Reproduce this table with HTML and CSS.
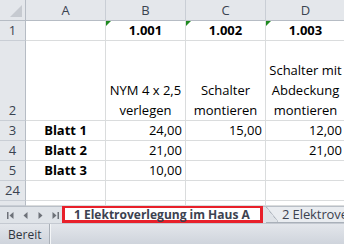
FILE: index.html
```html
<!DOCTYPE html>
<html lang="de">
<head>
<meta charset="utf-8">
<title>Elektroverlegung</title>
<link rel="stylesheet" href="styles.css">
</head>
<body>
<div class="book">
  <div class="sheet">
    <div class="hd corner"><span class="corner-tri"></span></div>
    <div class="hd col">A</div>
    <div class="hd col">B</div>
    <div class="hd col">C</div>
    <div class="hd col">D</div>

    <div class="hd row">1</div>
    <div class="c"></div>
    <div class="c b ctr flag">1.001</div>
    <div class="c b ctr flag">1.002</div>
    <div class="c b ctr flag">1.003</div>

    <div class="hd row">2</div>
    <div class="c"></div>
    <div class="c ctr wrap">NYM 4 x 2,5<br>verlegen</div>
    <div class="c ctr wrap">Schalter<br>montieren</div>
    <div class="c ctr wrap">Schalter mit<br>Abdeckung<br>montieren</div>

    <div class="hd row">3</div>
    <div class="c b ctr">Blatt 1</div>
    <div class="c num">24,00</div>
    <div class="c num">15,00</div>
    <div class="c num">12,00</div>

    <div class="hd row">4</div>
    <div class="c b ctr">Blatt 2</div>
    <div class="c num">21,00</div>
    <div class="c num"></div>
    <div class="c num">21,00</div>

    <div class="hd row">5</div>
    <div class="c b ctr">Blatt 3</div>
    <div class="c num">10,00</div>
    <div class="c"></div>
    <div class="c"></div>

    <div class="hd row">24</div>
    <div class="c"></div>
    <div class="c"></div>
    <div class="c"></div>
    <div class="c"></div>

    <div class="hd row"></div>
    <div class="c"></div>
    <div class="c"></div>
    <div class="c"></div>
    <div class="c"></div>
  </div>

  <div class="tabbar">
    <div class="nav">
      <svg width="9" height="9" viewBox="0 0 9 9"><rect x="1" y="1" width="1.5" height="7" fill="#6d7178"/><path d="M7.5 1 L3.5 4.5 L7.5 8 Z" fill="#6d7178"/></svg>
      <svg width="9" height="9" viewBox="0 0 9 9"><path d="M6.5 1 L2.5 4.5 L6.5 8 Z" fill="#6d7178"/></svg>
      <svg width="9" height="9" viewBox="0 0 9 9"><path d="M2.5 1 L6.5 4.5 L2.5 8 Z" fill="#6d7178"/></svg>
      <svg width="9" height="9" viewBox="0 0 9 9"><path d="M1.5 1 L5.5 4.5 L1.5 8 Z" fill="#6d7178"/><rect x="6.5" y="1" width="1.5" height="7" fill="#6d7178"/></svg>
    </div>
    <div class="tab active">1 Elektroverlegung im Haus A</div>
    <div class="tab next"><span class="next-label">2 Elektrover</span></div>
  </div>

  <div class="status">
    <span class="ready">Bereit</span>
  </div>
</div>
</body>
</html>
```
FILE: styles.css
```css
html, body {
  margin: 0;
  padding: 0;
  background: #ffffff;
}

.book {
  width: 344px;
  height: 244px;
  overflow: hidden;
  display: flex;
  flex-direction: column;
  font-family: "Open Sans", "Liberation Sans", sans-serif;
  font-size: 13px;
  color: #000;
}

.sheet {
  display: grid;
  grid-template-columns: 26px 80px 80px 80px 80px;
  grid-template-rows: 21px 20px 80px 20px 20px 20px 20px 5px;
  height: 206px;
  overflow: hidden;
  flex: none;
}

.hd {
  background: #e4e7eb;
  color: #3a4350;
  border-right: 1px solid #b6bcc4;
  border-bottom: 1px solid #b6bcc4;
  display: flex;
  justify-content: center;
  box-sizing: border-box;
  line-height: 19px;
}

.hd.col {
  align-items: center;
  border-right-color: #c9ced5;
}

.hd.row {
  align-items: flex-end;
  border-bottom-color: #c9ced5;
}

.corner {
  position: relative;
}

.corner-tri {
  position: absolute;
  right: 3px;
  bottom: 3px;
  width: 0;
  height: 0;
  border-left: 12px solid transparent;
  border-bottom: 12px solid #c6cad0;
}

.c {
  border-right: 1px solid #dadcdd;
  border-bottom: 1px solid #dadcdd;
  box-sizing: border-box;
  display: flex;
  align-items: flex-end;
  line-height: 19px;
  white-space: nowrap;
  overflow: visible;
  position: relative;
}

.b { font-weight: bold; }

.ctr {
  justify-content: center;
  text-align: center;
}

.num {
  justify-content: flex-end;
  padding-right: 3px;
}

.wrap {
  line-height: 20px;
}

.flag::before {
  content: "";
  position: absolute;
  left: 0;
  top: 0;
  border-top: 5px solid #1f8a1f;
  border-right: 5px solid transparent;
}

.tabbar {
  height: 17px;
  flex: none;
  background: #dfe3e8;
  border-top: 1px solid #b9bfc7;
  box-sizing: border-box;
  display: flex;
  align-items: stretch;
  position: relative;
}

.nav {
  width: 62px;
  flex: none;
  display: flex;
  align-items: center;
  gap: 6px;
  padding-left: 6px;
  box-sizing: border-box;
}

.tab {
  white-space: nowrap;
  color: #3c4250;
  font-size: 13px;
  line-height: 13px;
  display: flex;
  align-items: center;
}

.tab.active {
  flex: none;
  background: #ffffff;
  font-weight: bold;
  font-size: 12px;
  border: 3px solid #e8202a;
  border-top-width: 2px;
  margin-top: -1px;
  padding: 0 0 0 9px;
  width: 201px;
  box-sizing: border-box;
}

.tab.next {
  margin-left: 3px;
  padding-left: 16px;
  position: relative;
  background: #e9ecf0;
  border-bottom: 1px solid #a9b0b9;
  flex: 1;
  min-width: 0;
  overflow: hidden;
}

.next-label {
  letter-spacing: -0.1px;
}

.tab.next::before {
  content: "";
  position: absolute;
  left: 0;
  top: 0;
  bottom: 0;
  width: 12px;
  background: linear-gradient(to top right, #dfe3e8 49%, #a9b0b9 50%, #e9ecf0 56%);
}

.status {
  flex: 1;
  background: linear-gradient(#e3e6eb, #cfd4dc);
  border-top: 1px solid #c4c9d1;
  display: flex;
  align-items: center;
  font-size: 12px;
  color: #2f3540;
}

.ready {
  padding: 0 8px 0 8px;
  border-right: 1px solid #aab0b8;
  height: 100%;
  display: flex;
  align-items: center;
  box-shadow: 1px 0 0 #f4f6f8;
}
```
